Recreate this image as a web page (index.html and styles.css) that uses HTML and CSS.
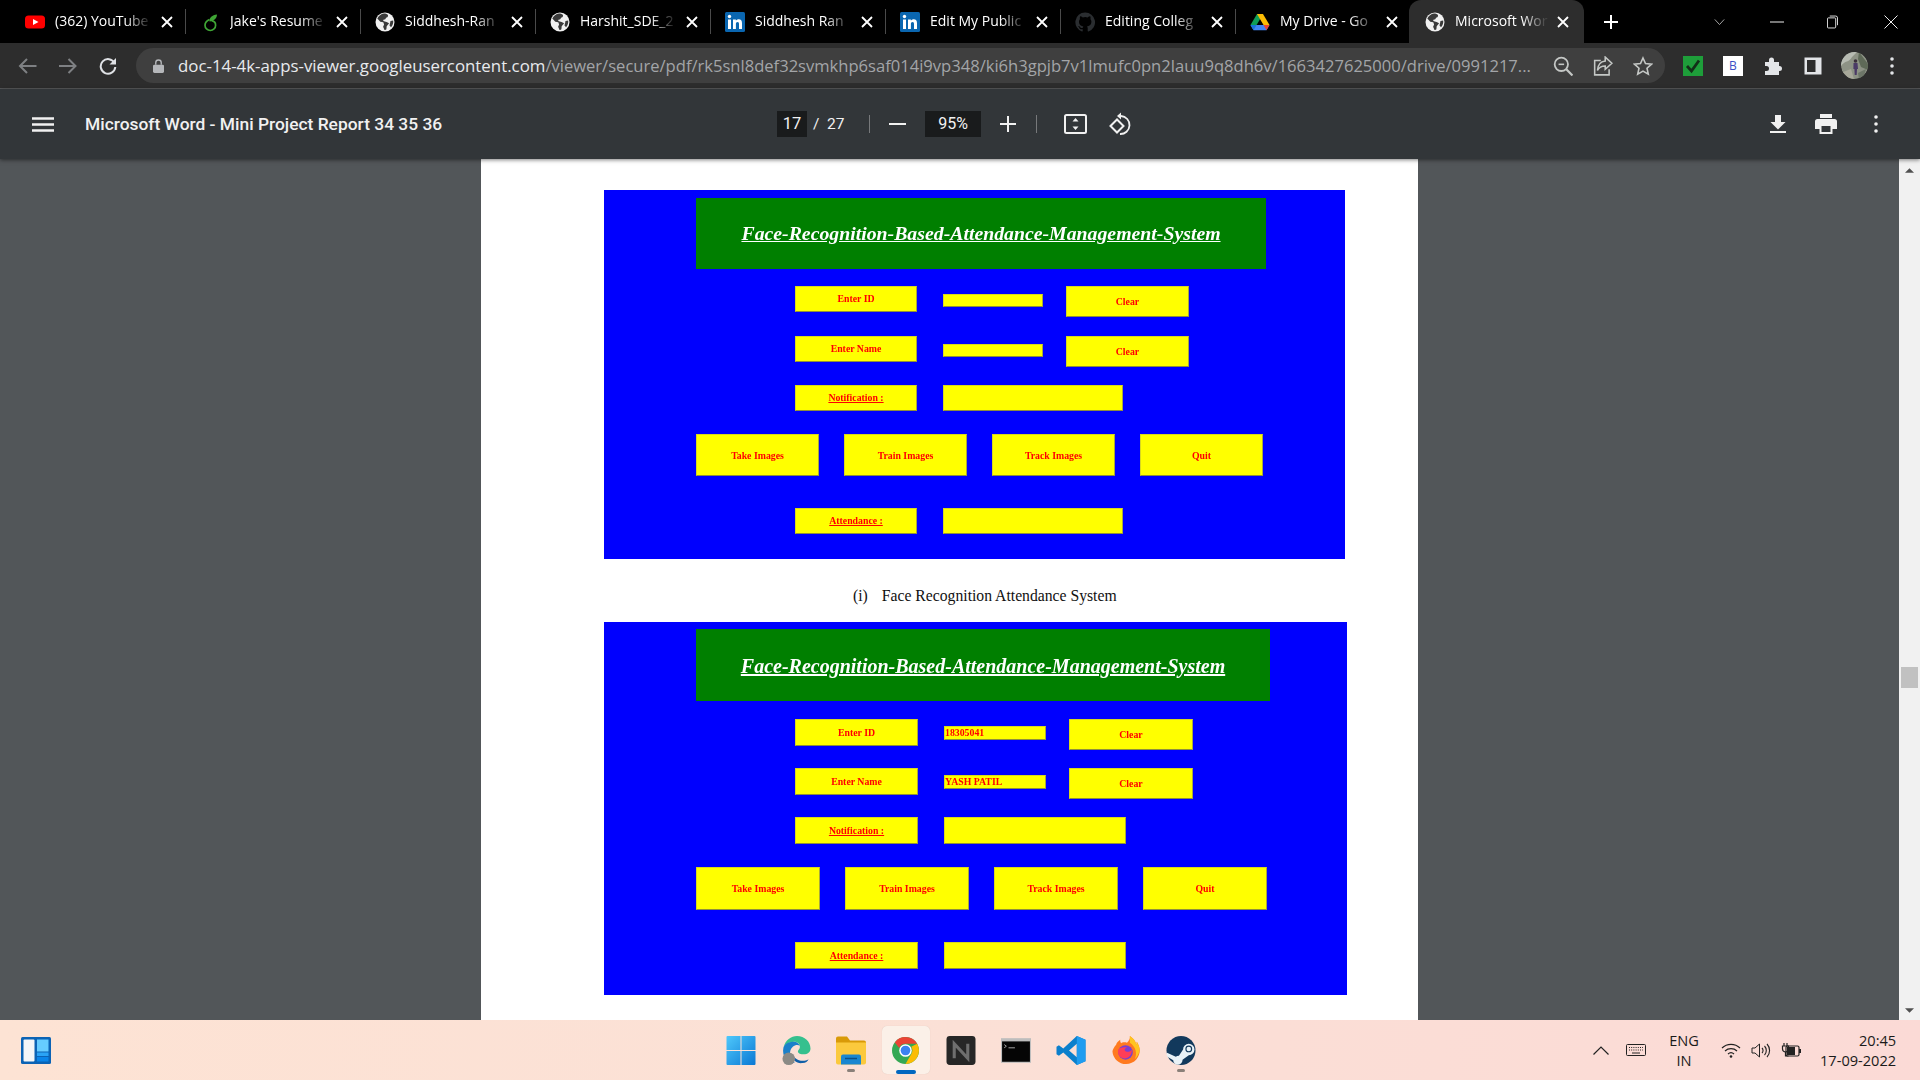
FILE: index.html
```html
<!DOCTYPE html>
<html lang="en">
<head>
    <meta charset="UTF-8">
    <title>Microsoft Word - Mini Project Report 34 35 36</title>
    <link rel="stylesheet" href="styles.css">
</head>
<body>
<svg class="defs" width="0" height="0">
    <symbol id="globe" viewBox="0 0 20 20">
        <circle cx="10" cy="10" r="9.5" fill="#f1f1f1"/>
        <path d="M9 1.5C6 2 3.5 3.8 2.3 6.5l3 3.2 3 .6.8 2.2-1 2.2 1.4 3.4c1 .1 1.6-.2 1.9-.8l.3-3 2.4-3-2.5-1.4-2.7-.6-1-1.3 2.4-.7.8-1.6 1.6-.6.4-2.2C11.300 1.700 10 1.400 9 1.500z" fill="#3a3a3a"/>
        <path d="M15.500 9l2.700-.500c.3 2.500-.4 4.800-2.200 6.700l-1.500-1.700 1-4.500z" fill="#3a3a3a"/>
    </symbol>
    <symbol id="linkedin" viewBox="0 0 20 20">
        <rect width="20" height="20" rx="1.500" fill="#0a66b0"/>
        <rect x="3" y="7.500" width="3" height="9.500" fill="#fff"/>
        <circle cx="4.500" cy="4.500" r="1.700" fill="#fff"/>
        <path d="M8 7.500h2.900v1.300c.6-1 1.600-1.500 2.800-1.500 2.400 0 3.300 1.500 3.300 4V17h-3v-5c0-1.200-.4-2-1.400-2-1.200 0-1.700.9-1.700 2v5H8z" fill="#fff"/>
    </symbol>
    <symbol id="close" viewBox="0 0 12 12">
        <path d="M1 1l10 10M11 1L1 11" stroke="#fff" stroke-width="1.800" fill="none"/>
    </symbol>
</svg>

<div class="tabstrip">
    <div class="tab">
        <svg class="favicon" viewBox="0 0 20 20"><rect y="3.500" width="20" height="13" rx="3.500" fill="#f00"/><path d="M8 7l5.500 3L8 13z" fill="#fff"/></svg>
        <span class="tab-title">(362) YouTube</span>
        <svg class="tab-close"><use href="#close"/></svg>
    </div>
    <div class="tab">
        <svg class="favicon" viewBox="0 0 20 20"><path d="M9.500 7.500C6.500 9 5 10.800 5 13.200a5.300 5.300 0 0 0 10.600 0c0-2.400-1.600-4-3.900-4.500" stroke="#3fa535" stroke-width="1.700" fill="none"/><path d="M9.500 9.500C9.200 5.500 12 3 17 2.500c-.2 4-2.800 6.500-7.500 7z" fill="#3fa535"/></svg>
        <span class="tab-title">Jake's Resume</span>
        <svg class="tab-close"><use href="#close"/></svg>
    </div>
    <div class="tab">
        <svg class="favicon"><use href="#globe"/></svg>
        <span class="tab-title">Siddhesh-Ran</span>
        <svg class="tab-close"><use href="#close"/></svg>
    </div>
    <div class="tab">
        <svg class="favicon"><use href="#globe"/></svg>
        <span class="tab-title">Harshit_SDE_2</span>
        <svg class="tab-close"><use href="#close"/></svg>
    </div>
    <div class="tab">
        <svg class="favicon"><use href="#linkedin"/></svg>
        <span class="tab-title">Siddhesh Ran</span>
        <svg class="tab-close"><use href="#close"/></svg>
    </div>
    <div class="tab">
        <svg class="favicon"><use href="#linkedin"/></svg>
        <span class="tab-title">Edit My Public</span>
        <svg class="tab-close"><use href="#close"/></svg>
    </div>
    <div class="tab">
        <svg class="favicon" viewBox="0 0 20 20"><path d="M10 .5a9.700 9.700 0 0 0-3 18.900c.5.1.7-.2.7-.5v-1.700c-2.700.6-3.300-1.300-3.300-1.300-.4-1.100-1-1.400-1-1.400-.9-.6.1-.6.1-.6 1 .1 1.500 1 1.500 1 .9 1.500 2.300 1.100 2.800.8.1-.6.3-1.100.6-1.300-2.200-.3-4.400-1.100-4.400-4.800 0-1.100.4-1.900 1-2.600-.1-.2-.4-1.200.1-2.600 0 0 .8-.3 2.700 1a9 9 0 0 1 4.800 0c1.900-1.300 2.700-1 2.700-1 .5 1.400.2 2.400.1 2.600.6.700 1 1.500 1 2.600 0 3.700-2.200 4.500-4.400 4.800.4.300.7.900.7 1.800v2.700c0 .3.200.6.700.5A9.700 9.700 0 0 0 10 .5z" fill="#2a2d30"/></svg>
        <span class="tab-title">Editing Colleg</span>
        <svg class="tab-close"><use href="#close"/></svg>
    </div>
    <div class="tab">
        <svg class="favicon" viewBox="0 0 20 20"><path d="M7 2h6l-3.300 5.800L6.600 13H.5z" fill="#0f9d58"/><path d="M7 2h6l6.500 11h-6z" fill="#fbbc04"/><path d="M.5 13h19l-3 5.200h-13z" fill="#4285f4"/><path d="M.5 13h6.100l-3.100 5.200z" fill="#1a73d8"/><path d="M13.500 13h6l-3 5.200z" fill="#ea4335"/></svg>
        <span class="tab-title">My Drive - Go</span>
        <svg class="tab-close"><use href="#close"/></svg>
    </div>
    <div class="tab tab-active">
        <svg class="favicon"><use href="#globe"/></svg>
        <span class="tab-title">Microsoft Wor</span>
        <svg class="tab-close"><use href="#close"/></svg>
    </div>
    <svg class="new-tab" viewBox="0 0 14 14"><path d="M7 0v14M0 7h14" stroke="#fff" stroke-width="2"/></svg>
    <div class="window-btns">
        <svg class="win-chevron" viewBox="0 0 12 7"><path d="M.5.500L6 6.500 11.500.500" stroke="#bbb" fill="none"/></svg>
        <svg class="win-min" viewBox="0 0 14 2"><path d="M0 1h14" stroke="#eee"/></svg>
        <svg class="win-restore" viewBox="0 0 12 14"><rect x=".5" y="2.500" width="9" height="11" rx="1" stroke="#eee" fill="none"/><path d="M3 .5h6.500a2 2 0 0 1 2 2v8" stroke="#eee" fill="none"/></svg>
        <svg class="win-close" viewBox="0 0 14 14"><path d="M.5.500l13 13M13.500.500l-13 13" stroke="#eee" fill="none"/></svg>
    </div>
</div>

<div class="toolbar">
    <svg class="tool-back" viewBox="0 0 18 16"><path d="M18 8H2M8.500 1L1.500 8l7 7" stroke="#7e8083" stroke-width="2" fill="none"/></svg>
    <svg class="tool-forward" viewBox="0 0 18 16"><path d="M0 8h16M9.500 1l7 7-7 7" stroke="#7e8083" stroke-width="2" fill="none"/></svg>
    <svg class="tool-reload" viewBox="0 0 18 18"><path d="M15.500 6a7.300 7.300 0 1 0 .8 4" stroke="#dfe1e5" stroke-width="2" fill="none"/><path d="M17 1v6.500h-6.500z" fill="#dfe1e5"/></svg>
    <div class="omnibox">
        <svg class="lock" viewBox="0 0 12 15"><path d="M3 6V4a3 3 0 0 1 6 0v2" stroke="#b5b7ba" stroke-width="1.500" fill="none"/><rect y="6" width="12" height="9" rx="1.500" fill="#b5b7ba"/></svg>
        <span class="url"><span class="url-host">doc-14-4k-apps-viewer.googleusercontent.com</span>/viewer/secure/pdf/rk5snl8def32svmkhp6saf014i9vp348/ki6h3gpjb7v1lmufc0pn2lauu9q8dh6v/1663427625000/drive/0991217...</span>
        <svg class="omni-icon" viewBox="0 0 18 18"><circle cx="7.500" cy="7.500" r="6" stroke="#c4c7c5" stroke-width="1.600" fill="none"/><path d="M12 12l5.500 5.500" stroke="#c4c7c5" stroke-width="2"/><path d="M5 7.500h5" stroke="#c4c7c5" stroke-width="1.400"/></svg>
        <svg class="omni-icon" viewBox="0 0 18 18"><path d="M7 4H1.500v13h13v-5" stroke="#c4c7c5" stroke-width="1.400" fill="none"/><path d="M11 1l6 5.500-6 5.500V9C8 9 5.500 10 4 13c.3-5 3-8 7-8.500z" stroke="#c4c7c5" stroke-width="1.400" fill="none"/></svg>
        <svg class="omni-icon" viewBox="0 0 20 19"><path d="M10 1.500l2.500 5.600 6 .6-4.500 4 1.300 6L10 14.600l-5.300 3.100 1.300-6-4.500-4 6-.6z" stroke="#c4c7c5" stroke-width="1.600" fill="none"/></svg>
    </div>
    <div class="ext-group">
        <svg class="ext" viewBox="0 0 20 20"><rect width="20" height="20" fill="#1e9e3a"/><path d="M4 10l4.500 5L16 4.500" stroke="#123018" stroke-width="2.800" fill="none"/></svg>
        <span class="ext ext-b">B</span>
        <svg class="ext" viewBox="0 0 20 20"><path d="M2 6h4V4a2.500 2.500 0 0 1 5 0v2h5v4h.5a2.500 2.500 0 0 1 0 5H16v4H2v-4h1.500a2.500 2.500 0 0 0 0-5H2z" fill="#e3e5e8"/></svg>
        <svg class="ext" viewBox="0 0 20 20"><path d="M1.500 1.500h17v17h-17z" fill="#e3e5e8"/><path d="M4 4h8.500v12H4z" fill="#2d2d2d"/></svg>
        <svg class="avatar" viewBox="0 0 27 27"><circle cx="13.500" cy="13.500" r="13.500" fill="#8d9285"/><path d="M0 14C4 8 8 11 11 5l5-5H6A13 13 0 0 0 0 14z" fill="#b7bbb2"/><path d="M18 0l9 12v6l-7-3-3-8z" fill="#5f6a58"/><path d="M2 20l8-3 3 10H8z" fill="#a8a89a"/><path d="M17 21l8-4-2 7-5 3z" fill="#6d7668"/><circle cx="14.500" cy="9" r="1.800" fill="#3a2f3a"/><path d="M12.500 11h4l.5 6h-1l-.3 6h-2l-.3-6h-1z" fill="#4a3a66"/></svg>
        <svg class="kebab" viewBox="0 0 4 18"><circle cx="2" cy="2" r="1.800"/><circle cx="2" cy="9" r="1.800"/><circle cx="2" cy="16" r="1.800"/></svg>
    </div>
</div>

<div class="pdf-bar">
    <div class="pdf-left">
        <svg class="pdf-menu" viewBox="0 0 22 15"><path d="M0 1.500h22M0 7.500h22M0 13.500h22" stroke="#f1f1f1" stroke-width="2.400"/></svg>
        <span class="pdf-title">Microsoft Word - Mini Project Report 34 35 36</span>
    </div>
    <div class="pdf-center">
        <span class="num-box page-box">17</span>
        <span class="page-total">/&nbsp;&nbsp;27</span>
        <i class="pdf-sep sep-one"></i>
        <svg class="zoom-minus" viewBox="0 0 17 2"><path d="M0 1h17" stroke="#f1f1f1" stroke-width="2"/></svg>
        <span class="num-box zoom-box">95%</span>
        <svg class="zoom-plus" viewBox="0 0 16 16"><path d="M8 0v16M0 8h16" stroke="#f1f1f1" stroke-width="2"/></svg>
        <i class="pdf-sep sep-two"></i>
        <svg class="fit-icon" viewBox="0 0 23 20"><rect x="1" y="1" width="21" height="18" rx="1.500" stroke="#f1f1f1" stroke-width="2" fill="none"/><path d="M11.500 4l3 3.500h-6zM11.500 16l-3-3.500h6z" fill="#f1f1f1"/></svg>
        <svg class="rotate-icon" viewBox="0 0 23 24"><path d="M1.500 14L8 7.500l6.500 6.500L8 20.500z" stroke="#f1f1f1" stroke-width="2" fill="none"/><path d="M12 4a9 9 0 1 1-1 18" stroke="#f1f1f1" stroke-width="1.800" fill="none"/><path d="M12 .5v7L8 4z" fill="#f1f1f1"/></svg>
    </div>
    <div class="pdf-right">
        <svg class="dl-icon" viewBox="0 0 16 18"><path d="M5 0h6v7h4.500L8 14.500.5 7H5zM0 16h16v2H0z" fill="#f1f1f1"/></svg>
        <svg class="print-icon" viewBox="0 0 22 20"><path d="M5 0h12v4H5zM2.500 5h17A2.500 2.500 0 0 1 22 7.500V15h-4.500v5h-13v-5H0V7.500A2.500 2.500 0 0 1 2.500 5z" fill="#f1f1f1"/><path d="M6.500 12h9v6h-9z" fill="#323639"/></svg>
        <svg class="kebab pdf-kebab" viewBox="0 0 4 18"><circle cx="2" cy="2" r="1.800"/><circle cx="2" cy="9" r="1.800"/><circle cx="2" cy="16" r="1.800"/></svg>
    </div>
</div>

<div class="viewer">
    <div class="gutter"></div>
    <div class="page">
        <div class="shot shot-a">
            <div class="banner"><span>Face-Recognition-Based-Attendance-Management-System</span></div>
            <div class="form">
                <div class="row row-indent">
                    <span class="box label">Enter ID</span>
                    <span class="box entry"></span>
                    <span class="box clear">Clear</span>
                </div>
                <div class="row row-indent">
                    <span class="box label">Enter Name</span>
                    <span class="box entry"></span>
                    <span class="box clear">Clear</span>
                </div>
                <div class="row row-indent">
                    <span class="box label"><u>Notification :</u></span>
                    <span class="box wide"></span>
                </div>
                <div class="row row-buttons">
                    <span class="box big">Take Images</span>
                    <span class="box big">Train Images</span>
                    <span class="box big">Track Images</span>
                    <span class="box big">Quit</span>
                </div>
                <div class="row row-indent">
                    <span class="box label"><u>Attendance :</u></span>
                    <span class="box wide"></span>
                </div>
            </div>
        </div>
        <p class="caption"><span>(i)</span><span>Face Recognition Attendance System</span></p>
        <div class="shot shot-b">
            <div class="banner"><span>Face-Recognition-Based-Attendance-Management-System</span></div>
            <div class="form">
                <div class="row row-indent">
                    <span class="box label">Enter ID</span>
                    <span class="box entry">18305041</span>
                    <span class="box clear">Clear</span>
                </div>
                <div class="row row-indent">
                    <span class="box label">Enter Name</span>
                    <span class="box entry">YASH PATIL</span>
                    <span class="box clear">Clear</span>
                </div>
                <div class="row row-indent">
                    <span class="box label"><u>Notification :</u></span>
                    <span class="box wide"></span>
                </div>
                <div class="row row-buttons">
                    <span class="box big">Take Images</span>
                    <span class="box big">Train Images</span>
                    <span class="box big">Track Images</span>
                    <span class="box big">Quit</span>
                </div>
                <div class="row row-indent">
                    <span class="box label"><u>Attendance :</u></span>
                    <span class="box wide"></span>
                </div>
            </div>
        </div>
    </div>
    <div class="gutter"></div>
    <div class="scrollbar">
        <svg class="arrow" viewBox="0 0 10 5"><path d="M5 0l5 5H0z"/></svg>
        <div class="track"><div class="thumb"></div></div>
        <svg class="arrow" viewBox="0 0 10 5"><path d="M5 5l5-5H0z"/></svg>
    </div>
</div>

<div class="taskbar">
    <div class="task-left">
        <svg class="widgets" viewBox="0 0 30 27"><rect width="30" height="27" rx="1.500" fill="#0b63b5"/><rect x="2.500" y="2.500" width="11" height="22" rx="1" fill="#f4f6f8"/><rect x="16" y="2.500" width="11.500" height="12" fill="#66ccff"/><rect x="16" y="15.500" width="11.500" height="3.500" fill="#2aa3f5"/><rect x="16" y="20" width="11.500" height="4.500" fill="#0a84e8"/></svg>
    </div>
    <div class="task-apps">
        <div class="app">
            <svg viewBox="0 0 29 29"><defs><linearGradient id="win" x1="0" y1="0" x2="1" y2="1"><stop offset="0" stop-color="#4fc8fb"/><stop offset="1" stop-color="#0a78d4"/></linearGradient></defs><path d="M1 0h13v14H0V1a1 1 0 0 1 1-1zM15 0h13a1 1 0 0 1 1 1v13H15zM0 15h14v14H1a1 1 0 0 1-1-1zM15 15h14v13a1 1 0 0 1-1 1H15z" fill="url(#win)"/></svg>
        </div>
        <div class="app">
            <svg viewBox="0 0 30 30"><path d="M2 12C4 4 10 0 16 0c8 0 14 6 14 13 0 4-3 6-7 6-3 0-6-1-6-3 0-2 2-2 2-5 0-3-3-5-6-5C8 6 3 9 2 12z" fill="#35c08e"/><path d="M2 12C4 7 9 6 13 6c3 0 5 2 6 4-4-2-9 1-10 6-1 4 1 9 5 12C6 28 0 21 2 12z" fill="#1b80c9"/><path d="M11 20c0 5 5 9 11 8 3 0 5-2 6-4-3 2-7 2-10 1s-5-3-7-5z" fill="#0f5fa8"/><circle cx="7.500" cy="23.500" r="6.500" fill="#8b8a85"/></svg>
        </div>
        <div class="app app-running">
            <svg viewBox="0 0 30 28"><path d="M0 2a2 2 0 0 1 2-2h9l3 4h14a2 2 0 0 1 2 2v4H0z" fill="#d99a08"/><path d="M0 6h30v20a2 2 0 0 1-2 2H2a2 2 0 0 1-2-2z" fill="#fbc93d"/><path d="M5 20a2 2 0 0 1 2-2h16a2 2 0 0 1 2 2v8H5z" fill="#1a86d0"/><path d="M9 22h12" stroke="#0b4f88" stroke-width="1.500"/></svg>
        </div>
        <div class="app app-active">
            <svg viewBox="0 0 28 28"><circle cx="14" cy="14" r="14" fill="#34a853"/><path d="M14 0a14 14 0 0 1 12.100 7H14a7 7 0 0 0-6.500 4.300L2.900 5.600A14 14 0 0 1 14 0z" fill="#ea4335"/><path d="M26.100 7A14 14 0 0 1 14 28l6-10.500A7 7 0 0 0 20 10z" fill="#fbbc04"/><circle cx="14" cy="14" r="6.500" fill="#fff"/><circle cx="14" cy="14" r="5" fill="#3b82f0"/></svg>
        </div>
        <div class="app">
            <svg viewBox="0 0 30 30"><rect width="30" height="30" rx="3.500" fill="#262626"/><path d="M8 23V8l14 15V8" stroke="#6e6e6e" stroke-width="3.200" fill="none"/></svg>
        </div>
        <div class="app">
            <svg viewBox="0 0 28 23"><rect width="28" height="23" fill="#bdbdbd"/><rect x="1" y="3" width="26" height="19" fill="#050505"/><path d="M3 6l2 1.500L3 9M7 9h6" stroke="#bbb" stroke-width=".8" fill="none"/></svg>
        </div>
        <div class="app">
            <svg viewBox="0 0 30 30"><path d="M21 0l9 4v22l-9 4L7 17l-4.500 3.500L0 19v-8l2.500-1.500L7 13zM21 8l-8 7 8 7z" fill="#0b7fcc" fill-rule="evenodd"/><path d="M21 0l9 4v22l-9 4z" fill="#1f9cf0"/></svg>
        </div>
        <div class="app">
            <svg viewBox="0 0 30 30"><path d="M15 29A14 14 0 0 0 29 13c-.5-3-2-6-3-7 .2 1.500 0 2.500-.3 3C25 5 22 2 19 0c.5 3-1 5-3 7-3-1-5.500 0-6 .5C9 6.500 9 5 9 4 6 6 5 8 4.800 9 3 11 1 14 1 16a14 14 0 0 0 14 13z" fill="#ff7a1f"/><path d="M19 0c3 2 6 5 6.700 9 .3-.5.500-1.500.3-3 1 1 2.500 4 3 7a14 14 0 0 1-5 11c3-6 1-13-5-17z" fill="#ffc51f"/><circle cx="14.500" cy="17" r="7.500" fill="#7a3fd0"/><path d="M7 14c2-2 5-3 9-2-3 1-3 3-1 4s5 0 6-2c.5 6-4 10-9 9-4-1-6-5-5-9z" fill="#ff3d57"/></svg>
        </div>
        <div class="app app-running">
            <svg viewBox="0 0 28 28"><circle cx="14" cy="14" r="14" fill="#12395c"/><path d="M0 16l9 4a4.500 4.500 0 0 1 3-1l4-6a5.500 5.500 0 1 1 5.500 5.500l-6 4.500a4.500 4.500 0 0 1-9 .3L.8 20A14 14 0 0 1 0 16z" fill="#e9f2f7"/><circle cx="21.500" cy="12.500" r="3.300" fill="#12395c"/><circle cx="21.500" cy="12.500" r="2.200" fill="#e9f2f7"/></svg>
        </div>
    </div>
    <div class="task-tray">
        <svg class="tray-chevron" viewBox="0 0 16 9"><path d="M.5 8.500L8 1l7.500 7.500" stroke="#222" stroke-width="1.200" fill="none"/></svg>
        <svg class="tray-keyboard" viewBox="0 0 20 12"><rect x=".5" y=".5" width="19" height="11" rx="1" stroke="#222" fill="none"/><path d="M3 3.500h14M3 6h14" stroke="#222" stroke-dasharray="1 1.200"/><path d="M6 9h8" stroke="#222"/></svg>
        <div class="tray-lang"><span>ENG</span><span>IN</span></div>
        <svg class="tray-wifi" viewBox="0 0 20 15"><path d="M1 5a13 13 0 0 1 18 0M4 8a9 9 0 0 1 12 0M7 11a4.500 4.500 0 0 1 6 0" stroke="#222" stroke-width="1.200" fill="none"/><circle cx="10" cy="13.500" r="1.300" fill="#222"/></svg>
        <svg class="tray-volume" viewBox="0 0 20 15"><path d="M1 5h3l4.500-4v13L4 10H1z" stroke="#222" fill="none"/><path d="M11 5a3.500 3.500 0 0 1 0 5M13.500 3a6.500 6.500 0 0 1 0 9M16 1a9.500 9.500 0 0 1 0 13" stroke="#222" stroke-width="1.100" fill="none"/></svg>
        <svg class="tray-battery" viewBox="0 0 20 15"><path d="M3 0v3M6 0v3M1.500 3h6v3a3 3 0 0 1-6 0zM4.500 9v4h3" stroke="#222" stroke-width="1.200" fill="none"/><rect x="5" y="3" width="13" height="10" rx="1.500" stroke="#222" stroke-width="1.200" fill="none"/><rect x="6" y="4" width="8" height="8" fill="#222"/><rect x="18" y="6" width="2" height="4" fill="#222"/></svg>
        <div class="tray-clock"><span>20:45</span><span>17-09-2022</span></div>
    </div>
</div>
</body>
</html>
```

FILE: styles.css
```css
*{
    margin: 0;
    padding: 0;
    box-sizing: border-box;
}
html,body{
    width: 100%;
    height: 100%;
    overflow: hidden;
}
body{
    display: flex;
    flex-direction: column;
    font-family: "Open Sans", "Liberation Sans", sans-serif;
    background: #525659;
}
svg{
    display: block;
    flex: none;
}
.defs{
    position: absolute;
}

/* tab strip */
.tabstrip{
    height: 43px;
    flex: none;
    display: flex;
    align-items: center;
    padding-left: 11px;
    background: #000;
    color: #fff;
}
.tab{
    width: 175px;
    height: 43px;
    flex: none;
    display: flex;
    align-items: center;
    padding: 0 13px 0 14px;
    position: relative;
}
.tab::after{
    content: "";
    position: absolute;
    right: 0;
    top: 9px;
    width: 1px;
    height: 25px;
    background: #4a4a4a;
}
.tab:nth-child(8)::after,
.tab-active::after{
    display: none;
}
.tab-active{
    margin-left: -2px;
    padding: 0 15px 0 16px;
    background: #2d2d2d;
    border-radius: 12px 12px 0 0;
}
.favicon{
    width: 20px;
    height: 20px;
}
.tab-title{
    flex: 1;
    min-width: 0;
    margin-left: 10px;
    padding-bottom: 2px;
    font-size: 14px;
    line-height: 20px;
    white-space: nowrap;
    overflow: hidden;
    -webkit-mask-image: linear-gradient(to right, #000 70%, rgba(0,0,0,.1) 94%);
    mask-image: linear-gradient(to right, #000 70%, rgba(0,0,0,.1) 94%);
}
.tab-close{
    width: 12px;
    height: 12px;
    margin-left: 6px;
}
.new-tab{
    width: 14px;
    height: 14px;
    margin-left: 20px;
}
.window-btns{
    flex: 1;
    display: flex;
    align-items: center;
    padding-left: 96px;
}
.win-chevron{
    width: 11px;
    height: 6px;
}
.win-min{
    width: 14px;
    height: 2px;
    margin-left: 45px;
}
.win-restore{
    width: 11px;
    height: 14px;
    margin-left: 43px;
}
.win-close{
    width: 14px;
    height: 14px;
    margin-left: 46px;
}

/* address bar */
.toolbar{
    height: 46px;
    flex: none;
    display: flex;
    align-items: center;
    padding-left: 18px;
    background: #2d2d2d;
    border-bottom: 1px solid #58595b;
}
.tool-back{
    width: 19px;
    height: 16px;
}
.tool-forward{
    width: 18px;
    height: 16px;
    margin-left: 22px;
}
.tool-reload{
    width: 18px;
    height: 18px;
    margin-left: 22px;
}
.omnibox{
    width: 1529px;
    height: 35px;
    margin-left: 19px;
    flex: none;
    display: flex;
    align-items: center;
    padding: 0 12px 0 17px;
    border-radius: 18px;
    background: #3f3f3f;
}
.lock{
    width: 11px;
    height: 14px;
}
.url{
    flex: 1;
    min-width: 0;
    margin-left: 14px;
    font-size: 16.570px;
    white-space: nowrap;
    color: #a3a5a8;
}
.url-host{
    font-size: 16.850px;
    color: #e8eaed;
}
.omni-icon{
    width: 20px;
    height: 20px;
    margin-left: 20px;
}
.ext-group{
    flex: 1;
    display: flex;
    align-items: center;
    padding-left: 18px;
}
.ext{
    width: 20px;
    height: 20px;
    margin-right: 20px;
    flex: none;
}
.ext-b{
    display: block;
    background: #fff;
    color: #3b4fc4;
    font: 12px/20px "Open Sans", sans-serif;
    text-align: center;
}
.avatar{
    width: 27px;
    height: 27px;
    margin-left: -2px;
    border-radius: 50%;
}
.kebab{
    width: 4px;
    height: 18px;
    fill: #e3e5e8;
    margin-left: 22px;
}

/* pdf viewer toolbar */
.pdf-bar{
    height: 70px;
    flex: none;
    display: flex;
    align-items: center;
    background: #323639;
    color: #f1f1f1;
    box-shadow: 0 1px 4px rgba(0,0,0,.5);
    position: relative;
}
.pdf-left{
    width: 777px;
    flex: none;
    display: flex;
    align-items: center;
    padding-left: 32px;
}
.pdf-menu{
    width: 22px;
    height: 15px;
}
.pdf-title{
    margin-left: 31px;
    font: 500 17.400px/20px Roboto, sans-serif;
    white-space: nowrap;
}
.pdf-center{
    display: flex;
    align-items: center;
    flex: 1;
}
.num-box{
    height: 26px;
    display: block;
    background: #191b1c;
    text-align: center;
    font: 16px/25px Roboto, sans-serif;
}
.page-box{
    width: 30px;
    font-size: 16.500px;
}
.zoom-box{
    width: 56px;
    margin-left: 19px;
}
.page-total{
    font: 15.500px/26px Roboto, sans-serif;
    margin-left: 6px;
    width: 36px;
    white-space: nowrap;
}
.pdf-sep{
    width: 1px;
    height: 18px;
    background: #77797b;
    display: block;
}
.sep-one{
    margin-left: 20px;
}
.zoom-minus{
    width: 17px;
    height: 2px;
    margin-left: 19px;
}
.zoom-plus{
    width: 16px;
    height: 16px;
    margin-left: 19px;
}
.sep-two{
    margin-left: 20px;
}
.fit-icon{
    width: 23px;
    height: 20px;
    margin-left: 27px;
}
.rotate-icon{
    width: 23px;
    height: 24px;
    margin-left: 22px;
}
.pdf-right{
    display: flex;
    align-items: center;
    padding-right: 42px;
}
.dl-icon{
    width: 16px;
    height: 18px;
}
.print-icon{
    width: 22px;
    height: 20px;
    margin-left: 29px;
}
.pdf-kebab{
    fill: #f1f1f1;
    margin-left: 37px;
}

/* document area */
.viewer{
    flex: 1;
    min-height: 0;
    display: flex;
    overflow: hidden;
}
.gutter{
    flex: 1;
    background: #525659;
}
.page{
    width: 937px;
    flex: none;
    background: #fff;
    padding: 31px 0 0 123px;
}
.scrollbar{
    width: 21px;
    flex: none;
    display: flex;
    flex-direction: column;
    align-items: center;
    padding: 9px 0 7px;
    background: #f1f1f1;
}
.arrow{
    width: 9px;
    height: 5px;
    fill: #505050;
}
.track{
    flex: 1;
    width: 100%;
    padding: 494px 2px 0;
}
.thumb{
    height: 21px;
    background: #c1c1c1;
}

/* the two screenshots on the page */
.shot{
    background: #0000fe;
    filter: blur(.35px);
}
.shot-a{
    width: 741px;
    height: 369px;
    padding: 8px 0 0 92px;
    --banner-w: 570px;
    --banner-h: 71px;
    --title-size: 19.800px;
    --form-top: 17px;
    --indent: 99px;
    --label-w: 122px;
    --label-h: 26px;
    --entry-w: 100px;
    --entry-h: 13px;
    --entry-top: 8px;
    --entry-gap: 26px;
    --clear-gap: 23px;
    --clear-w: 123px;
    --clear-h: 31px;
    --wide-w: 180px;
    --big-w: 123px;
    --big-h: 42px;
    --big-gap: 25px;
    --rows: 50px 49px 49px 74px 26px;
}
.shot-b{
    width: 743px;
    height: 373px;
    padding: 7px 0 0 92px;
    --banner-w: 574px;
    --banner-h: 72px;
    --title-size: 20px;
    --form-top: 18px;
    --indent: 99px;
    --label-w: 123px;
    --label-h: 27px;
    --entry-w: 102px;
    --entry-h: 14px;
    --entry-top: 7px;
    --entry-gap: 26px;
    --clear-gap: 23px;
    --clear-w: 124px;
    --clear-h: 31px;
    --wide-w: 182px;
    --big-w: 124px;
    --big-h: 43px;
    --big-gap: 25px;
    --rows: 49px 49px 50px 75px 27px;
}
.banner{
    width: var(--banner-w);
    height: var(--banner-h);
    display: flex;
    align-items: center;
    justify-content: center;
    padding-top: 1px;
    background: #007f00;
    color: #fff;
    font: italic bold var(--title-size)/1.2 "Liberation Serif", serif;
    text-decoration: underline;
    white-space: nowrap;
}
.form{
    margin-top: var(--form-top);
    display: grid;
    grid-template-rows: var(--rows);
}
.row{
    display: flex;
    align-items: flex-start;
}
.row-indent{
    padding-left: var(--indent);
}
.row-buttons{
    gap: var(--big-gap);
}
.box{
    display: flex;
    align-items: center;
    justify-content: center;
    flex: none;
    background: #ff0;
    color: #f00;
    font: bold 9.800px/12px "Liberation Serif", serif;
    border: 1px solid #d8d820;
    border-right-color: #a8a838;
    border-bottom-color: #8f8f3a;
    white-space: nowrap;
}
.label{
    width: var(--label-w);
    height: var(--label-h);
}
.entry{
    width: var(--entry-w);
    height: var(--entry-h);
    margin: var(--entry-top) var(--clear-gap) 0 var(--entry-gap);
    justify-content: flex-start;
}
.clear{
    width: var(--clear-w);
    height: var(--clear-h);
}
.wide{
    width: var(--wide-w);
    height: var(--label-h);
    margin-left: var(--entry-gap);
}
.big{
    width: var(--big-w);
    height: var(--big-h);
    padding-top: 1px;
}
.caption{
    height: 63px;
    display: flex;
    align-items: center;
    gap: 14px;
    padding-left: 249px;
    padding-top: 11px;
    font: 15.700px/20px "Liberation Serif", serif;
    color: #111;
}

/* windows taskbar */
.taskbar{
    height: 60px;
    flex: none;
    display: grid;
    grid-template-columns: 1fr auto 1fr;
    align-items: center;
    background: linear-gradient(to right, #fde3d4, #fbe0d6 50%, #fbdad6);
    color: #1a1a1a;
}
.task-left{
    padding-left: 21px;
}
.widgets{
    width: 30px;
    height: 27px;
}
.task-apps{
    display: flex;
    margin-left: 1px;
}
.app{
    width: 55px;
    height: 48px;
    display: flex;
    align-items: center;
    justify-content: center;
    position: relative;
}
.app svg{
    width: 30px;
    height: 29px;
}
.app-running::after,
.app-active::after{
    content: "";
    position: absolute;
    bottom: 2px;
    left: 50%;
    width: 8px;
    height: 3px;
    margin-left: -4px;
    border-radius: 2px;
    background: #8a8079;
}
.app-active{
    background: #fbf0e8;
    border-radius: 5px;
    width: 48px;
    margin: 0 3.500px;
    box-shadow: 0 0 1px rgba(0,0,0,.15);
}
.app-active svg{
    width: 27px;
    height: 27px;
}
.app-active::after{
    width: 20px;
    height: 4px;
    margin-left: -10px;
    bottom: 0;
    background: #0067c0;
}
.task-tray{
    display: flex;
    align-items: center;
    padding-left: 385px;
    font-size: 14.600px;
    line-height: 20px;
}
.tray-chevron{
    width: 16px;
    height: 9px;
}
.tray-keyboard{
    width: 20px;
    height: 12px;
    margin-left: 17px;
}
.tray-lang{
    width: 30px;
    margin-left: 23px;
    display: flex;
    flex-direction: column;
    align-items: center;
}
.tray-wifi{
    width: 20px;
    height: 15px;
    margin-left: 22px;
}
.tray-volume{
    width: 20px;
    height: 15px;
    margin-left: 10px;
}
.tray-battery{
    width: 20px;
    height: 15px;
    margin-left: 10px;
}
.tray-clock{
    margin-left: 19px;
    display: flex;
    flex-direction: column;
    align-items: flex-end;
    white-space: nowrap;
}
```
